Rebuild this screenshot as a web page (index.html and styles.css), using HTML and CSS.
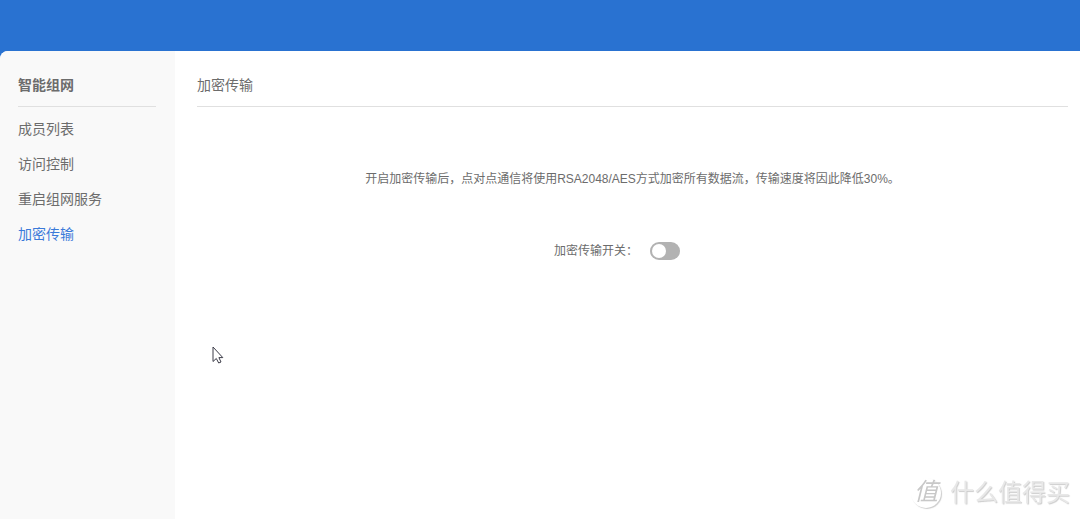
FILE: index.html
```html
<!DOCTYPE html>
<html lang="zh-CN">
<head>
<meta charset="utf-8">
<meta name="viewport" content="width=device-width, initial-scale=1">
<title>智能组网</title>
<link rel="stylesheet" href="styles.css">
</head>
<body>
<div class="panel">
  <aside class="sidebar">
    <h2 class="sidebar-title">智能组网</h2>
    <nav class="menu">
      <a class="menu-item" href="#members">成员列表</a>
      <a class="menu-item" href="#access">访问控制</a>
      <a class="menu-item" href="#restart">重启组网服务</a>
      <a class="menu-item active" href="#encrypt" aria-current="page">加密传输</a>
    </nav>
  </aside>
  <main class="content">
    <h1 class="content-title">加密传输</h1>
    <p class="description">开启加密传输后，点对点通信将使用RSA2048/AES方式加密所有数据流，传输速度将因此降低30%。</p>
    <div class="switch-row">
      <label for="encrypt-switch">加密传输开关：</label>
      <input class="switch" id="encrypt-switch" type="checkbox" role="switch">
    </div>
  </main>
</div>
<svg class="cursor" width="12" height="19" viewBox="0 0 12 19" aria-hidden="true">
  <path d="M1 1V15.5L4.3 12.5L6.7 17L9 16L6.9 11.6H10.8Z" fill="#fff" stroke="#3c3c48" stroke-width="1"/>
</svg>
<div class="watermark">
  <span class="watermark-logo">值</span>
  <span class="watermark-text">什么值得买</span>
</div>
</body>
</html>
```

FILE: styles.css
```css
* {
  box-sizing: border-box;
}

body {
  margin: 0;
  min-height: 100vh;
  display: flex;
  padding-top: 51px;
  background: #2972d1;
  color: #6c6c6c;
  font-family: "Liberation Sans", "Noto Sans CJK SC", sans-serif;
  font-size: 14px;
}

.panel {
  flex: 1;
  display: flex;
  background: #fff;
  border-top-left-radius: 8px;
  overflow: hidden;
}

.sidebar {
  width: 175px;
  flex: none;
  padding: 13px 19px 13px 18px;
  background: #f9f9f9;
}

.sidebar-title,
.content-title {
  margin: 0;
  border-bottom: 1px solid #e0e0e0;
  font-size: 14px;
  line-height: 42px;
}

.content-title {
  font-weight: 400;
}

.menu {
  display: flex;
  flex-direction: column;
  padding-top: 5px;
}

.menu-item {
  color: #6c6c6c;
  line-height: 35px;
  text-decoration: none;
}

.menu-item.active {
  color: #3b7ad9;
}

.content {
  flex: 1;
  min-width: 0;
  padding: 13px 12px 13px 22px;
}

.description {
  margin: 62px 0 0;
  font-size: 12px;
  line-height: 20px;
  text-align: center;
}

.switch-row {
  display: flex;
  justify-content: center;
  align-items: center;
  gap: 12px;
  margin-top: 52px;
  padding-right: 31px;
  font-size: 12px;
  line-height: 20px;
}

.switch {
  appearance: none;
  display: flex;
  width: 30px;
  height: 18px;
  margin: 0;
  padding: 2px;
  border-radius: 9px;
  background: #b2b2b2;
  cursor: pointer;
}

.switch::before {
  content: "";
  width: 14px;
  height: 14px;
  border-radius: 50%;
  background: #fff;
}

.switch:checked {
  justify-content: flex-end;
  background: #2972d1;
}

.cursor {
  position: absolute;
  left: 212px;
  top: 346px;
}

.watermark {
  position: fixed;
  right: 10px;
  bottom: 9px;
  display: flex;
  align-items: center;
  gap: 9px;
  color: #e8e8e8;
  text-shadow: 1px 1px 1px #ccc;
}

.watermark-logo {
  width: 30px;
  height: 30px;
  border-radius: 50%;
  box-shadow: 1px 1px 1px #ccc;
  color: #c8c8c8;
  font-size: 24px;
  font-style: italic;
  line-height: 28px;
  text-align: center;
  text-shadow: none;
}

.watermark-text {
  font-size: 24px;
  line-height: 34px;
}
```
